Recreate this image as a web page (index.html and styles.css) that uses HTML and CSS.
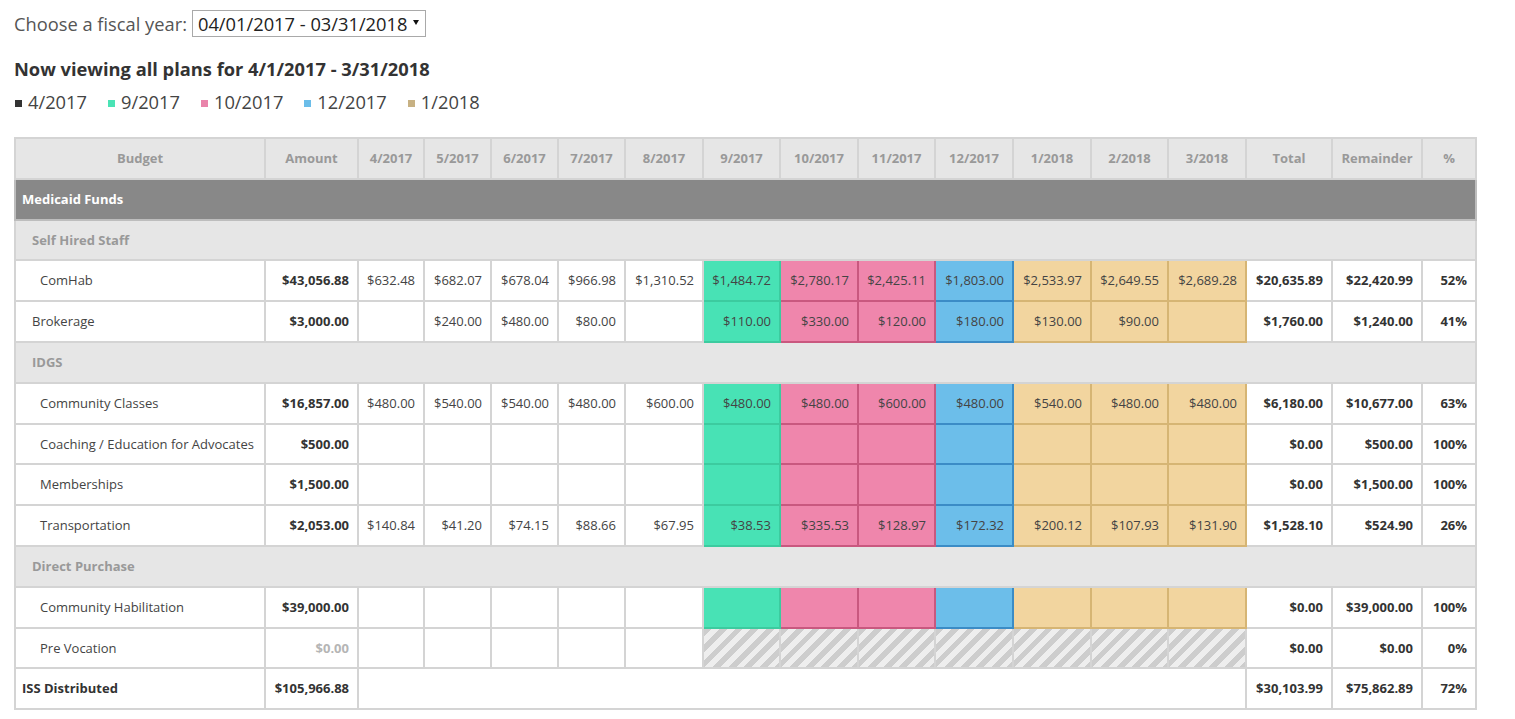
FILE: index.html
```html
<!DOCTYPE html>
<html lang="en">
<head>
    <meta charset="UTF-8">
    <meta name="viewport" content="width=device-width, initial-scale=1.0">
    <title>Fiscal Year Plans</title>
    <link rel="stylesheet" href="styles.css">
</head>
<body>

    <div class="pagina">
        <div class="escolha-ano">
            <label for="ano">Choose a fiscal year:</label>
            <div class="seletor">
                <select id="ano" name="ano">
                    <option>04/01/2017 - 03/31/2018</option>
                </select>
            </div>
        </div>

        <h2>Now viewing all plans for 4/1/2017 - 3/31/2018</h2>

        <div class="legenda">
            <span class="item-legenda"><span class="quadrado q-preto"></span>4/2017</span>
            <span class="item-legenda"><span class="quadrado q-verde"></span>9/2017</span>
            <span class="item-legenda"><span class="quadrado q-rosa"></span>10/2017</span>
            <span class="item-legenda"><span class="quadrado q-azul"></span>12/2017</span>
            <span class="item-legenda"><span class="quadrado q-bege"></span>1/2018</span>
        </div>

        <table class="tabela-plano">
            <colgroup>
                <col class="col-budget">
                <col class="col-amount">
                <col class="col-m66">
                <col class="col-m67">
                <col class="col-m67">
                <col class="col-m67">
                <col class="col-m78">
                <col class="col-m77">
                <col class="col-m78">
                <col class="col-m77">
                <col class="col-m78">
                <col class="col-m78">
                <col class="col-m77">
                <col class="col-m78">
                <col class="col-total">
                <col class="col-resto">
                <col class="col-pct">
            </colgroup>
            <thead>
                <tr>
                    <th>Budget</th>
                    <th>Amount</th>
                    <th>4/2017</th>
                    <th>5/2017</th>
                    <th>6/2017</th>
                    <th>7/2017</th>
                    <th>8/2017</th>
                    <th>9/2017</th>
                    <th>10/2017</th>
                    <th>11/2017</th>
                    <th>12/2017</th>
                    <th>1/2018</th>
                    <th>2/2018</th>
                    <th>3/2018</th>
                    <th>Total</th>
                    <th>Remainder</th>
                    <th>%</th>
                </tr>
            </thead>
            <tbody>
                <tr class="linha-fundo">
                    <td colspan="17">Medicaid Funds</td>
                </tr>
                <tr class="linha-grupo">
                    <td colspan="17">Self Hired Staff</td>
                </tr>
                <tr>
                    <td class="nome nivel-2">ComHab</td>
                    <td class="forte">$43,056.88</td>
                    <td>$632.48</td>
                    <td>$682.07</td>
                    <td>$678.04</td>
                    <td>$966.98</td>
                    <td>$1,310.52</td>
                    <td class="verde">$1,484.72</td>
                    <td class="rosa">$2,780.17</td>
                    <td class="rosa">$2,425.11</td>
                    <td class="azul">$1,803.00</td>
                    <td class="bege">$2,533.97</td>
                    <td class="bege">$2,649.55</td>
                    <td class="bege">$2,689.28</td>
                    <td class="forte">$20,635.89</td>
                    <td class="forte">$22,420.99</td>
                    <td class="forte">52%</td>
                </tr>
                <tr>
                    <td class="nome nivel-1">Brokerage</td>
                    <td class="forte">$3,000.00</td>
                    <td></td>
                    <td>$240.00</td>
                    <td>$480.00</td>
                    <td>$80.00</td>
                    <td></td>
                    <td class="verde">$110.00</td>
                    <td class="rosa">$330.00</td>
                    <td class="rosa">$120.00</td>
                    <td class="azul">$180.00</td>
                    <td class="bege">$130.00</td>
                    <td class="bege">$90.00</td>
                    <td class="bege"></td>
                    <td class="forte">$1,760.00</td>
                    <td class="forte">$1,240.00</td>
                    <td class="forte">41%</td>
                </tr>
                <tr class="linha-grupo">
                    <td colspan="17">IDGS</td>
                </tr>
                <tr>
                    <td class="nome nivel-2">Community Classes</td>
                    <td class="forte">$16,857.00</td>
                    <td>$480.00</td>
                    <td>$540.00</td>
                    <td>$540.00</td>
                    <td>$480.00</td>
                    <td>$600.00</td>
                    <td class="verde">$480.00</td>
                    <td class="rosa">$480.00</td>
                    <td class="rosa">$600.00</td>
                    <td class="azul">$480.00</td>
                    <td class="bege">$540.00</td>
                    <td class="bege">$480.00</td>
                    <td class="bege">$480.00</td>
                    <td class="forte">$6,180.00</td>
                    <td class="forte">$10,677.00</td>
                    <td class="forte">63%</td>
                </tr>
                <tr>
                    <td class="nome nivel-2">Coaching / Education for Advocates</td>
                    <td class="forte">$500.00</td>
                    <td></td>
                    <td></td>
                    <td></td>
                    <td></td>
                    <td></td>
                    <td class="verde"></td>
                    <td class="rosa"></td>
                    <td class="rosa"></td>
                    <td class="azul"></td>
                    <td class="bege"></td>
                    <td class="bege"></td>
                    <td class="bege"></td>
                    <td class="forte">$0.00</td>
                    <td class="forte">$500.00</td>
                    <td class="forte">100%</td>
                </tr>
                <tr>
                    <td class="nome nivel-2">Memberships</td>
                    <td class="forte">$1,500.00</td>
                    <td></td>
                    <td></td>
                    <td></td>
                    <td></td>
                    <td></td>
                    <td class="verde"></td>
                    <td class="rosa"></td>
                    <td class="rosa"></td>
                    <td class="azul"></td>
                    <td class="bege"></td>
                    <td class="bege"></td>
                    <td class="bege"></td>
                    <td class="forte">$0.00</td>
                    <td class="forte">$1,500.00</td>
                    <td class="forte">100%</td>
                </tr>
                <tr>
                    <td class="nome nivel-2">Transportation</td>
                    <td class="forte">$2,053.00</td>
                    <td>$140.84</td>
                    <td>$41.20</td>
                    <td>$74.15</td>
                    <td>$88.66</td>
                    <td>$67.95</td>
                    <td class="verde">$38.53</td>
                    <td class="rosa">$335.53</td>
                    <td class="rosa">$128.97</td>
                    <td class="azul">$172.32</td>
                    <td class="bege">$200.12</td>
                    <td class="bege">$107.93</td>
                    <td class="bege">$131.90</td>
                    <td class="forte">$1,528.10</td>
                    <td class="forte">$524.90</td>
                    <td class="forte">26%</td>
                </tr>
                <tr class="linha-grupo">
                    <td colspan="17">Direct Purchase</td>
                </tr>
                <tr>
                    <td class="nome nivel-2">Community Habilitation</td>
                    <td class="forte">$39,000.00</td>
                    <td></td>
                    <td></td>
                    <td></td>
                    <td></td>
                    <td></td>
                    <td class="verde"></td>
                    <td class="rosa"></td>
                    <td class="rosa"></td>
                    <td class="azul"></td>
                    <td class="bege"></td>
                    <td class="bege"></td>
                    <td class="bege"></td>
                    <td class="forte">$0.00</td>
                    <td class="forte">$39,000.00</td>
                    <td class="forte">100%</td>
                </tr>
                <tr>
                    <td class="nome nivel-2">Pre Vocation</td>
                    <td class="forte apagado">$0.00</td>
                    <td></td>
                    <td></td>
                    <td></td>
                    <td></td>
                    <td></td>
                    <td class="listrado"></td>
                    <td class="listrado"></td>
                    <td class="listrado"></td>
                    <td class="listrado"></td>
                    <td class="listrado"></td>
                    <td class="listrado"></td>
                    <td class="listrado"></td>
                    <td class="forte">$0.00</td>
                    <td class="forte">$0.00</td>
                    <td class="forte">0%</td>
                </tr>
                <tr class="linha-total">
                    <td class="nome">ISS Distributed</td>
                    <td class="forte">$105,966.88</td>
                    <td colspan="12"></td>
                    <td class="forte">$30,103.99</td>
                    <td class="forte">$75,862.89</td>
                    <td class="forte">72%</td>
                </tr>
            </tbody>
        </table>
    </div>

</body>
</html>
```

FILE: styles.css
```css
        body {
            margin: 0;
            font-family: 'Open Sans', 'Noto Sans', Arial, sans-serif;
            color: #444;
            background-color: #ffffff;
        }

        .pagina {
            padding: 10px 14px 0 14px;
        }

        .escolha-ano {
            display: flex;
            align-items: center;
            gap: 5px;
            font-size: 18.3px;
            color: #555;
        }

        .seletor {
            position: relative;
        }

        .seletor select {
            appearance: none;
            -webkit-appearance: none;
            font-family: inherit;
            font-size: 18.3px;
            color: #222;
            background: #fff;
            border: 1px solid #a9a9a9;
            border-radius: 0;
            height: 27px;
            padding: 0 17px 0 5px;
            margin: 0;
            line-height: 25px;
        }

        .seletor::after {
            content: "";
            position: absolute;
            right: 7px;
            top: 10px;
            border-left: 3px solid transparent;
            border-right: 3px solid transparent;
            border-top: 5px solid #111;
            pointer-events: none;
        }

        h2 {
            font-size: 18.3px;
            font-weight: 700;
            color: #333;
            line-height: 24px;
            margin: 20px 0 0 0;
        }

        .legenda {
            display: flex;
            gap: 20px;
            font-size: 18.3px;
            line-height: 24px;
            margin-top: 9px;
            color: #444;
        }

        .item-legenda {
            display: flex;
            align-items: center;
        }

        .quadrado {
            display: inline-block;
            width: 7px;
            height: 7px;
            margin-left: 1px;
            margin-right: 6px;
            margin-top: 3px;
        }

        .q-preto { background-color: #333; }
        .q-verde { background-color: #4ae3b5; }
        .q-rosa { background-color: #e984aa; }
        .q-azul { background-color: #6bbde9; }
        .q-bege { background-color: #c7b183; }

        .tabela-plano {
            margin-top: 23px;
            border-collapse: collapse;
            table-layout: fixed;
            width: 1461px;
            font-size: 13px;
            border: 2px solid #d9d9d9;
        }

        .col-budget { width: 250px; }
        .col-amount { width: 93px; }
        .col-m66 { width: 66px; }
        .col-m67 { width: 67px; }
        .col-m77 { width: 77px; }
        .col-m78 { width: 78px; }
        .col-total { width: 86px; }
        .col-resto { width: 90px; }
        .col-pct { width: 54px; }

        .tabela-plano th,
        .tabela-plano td {
            border: 2px solid #d4d4d4;
            line-height: 19px;
            padding: 10px 8px 9.8px 6px;
            white-space: nowrap;
            overflow: hidden;
        }

        .tabela-plano th {
            background-color: #e6e6e6;
            color: #999;
            font-weight: 700;
            text-align: center;
            padding-left: 4px;
            padding-right: 4px;
        }

        .tabela-plano td {
            text-align: right;
            color: #444;
        }

        .tabela-plano td.nome {
            text-align: left;
            color: #444;
        }

        .nivel-1 { padding-left: 16px !important; }
        .nivel-2 { padding-left: 24px !important; }

        .linha-fundo td {
            background-color: #888888;
            color: #ffffff !important;
            font-weight: 700;
            text-align: left !important;
            border-color: #bdbdbd;
        }

        .linha-grupo td {
            background-color: #e6e6e6;
            color: #999 !important;
            font-weight: 700;
            text-align: left !important;
            padding-left: 16px;
        }

        .linha-total td.nome {
            font-weight: 700;
            color: #333;
        }

        .tabela-plano td.forte {
            font-weight: 700;
            color: #333;
        }

        .tabela-plano td.apagado {
            color: #b5b5b5;
        }

        .tabela-plano td.verde {
            background-color: #48e2b5;
            border-color: #3ccb9f;
        }

        .tabela-plano td.rosa {
            background-color: #ef86ac;
            border-color: #c9587f;
        }

        .tabela-plano td.azul {
            background-color: #6cbeea;
            border-color: #3b8cc6;
        }

        .tabela-plano td.bege {
            background-color: #f2d59f;
            border-color: #d6b574;
        }

        .tabela-plano td.listrado {
            background: repeating-linear-gradient(135deg, #cdcdcd 0 5.5px, #eeeeee 5.5px 11px);
            border-color: #d4d4d4;
        }
```
